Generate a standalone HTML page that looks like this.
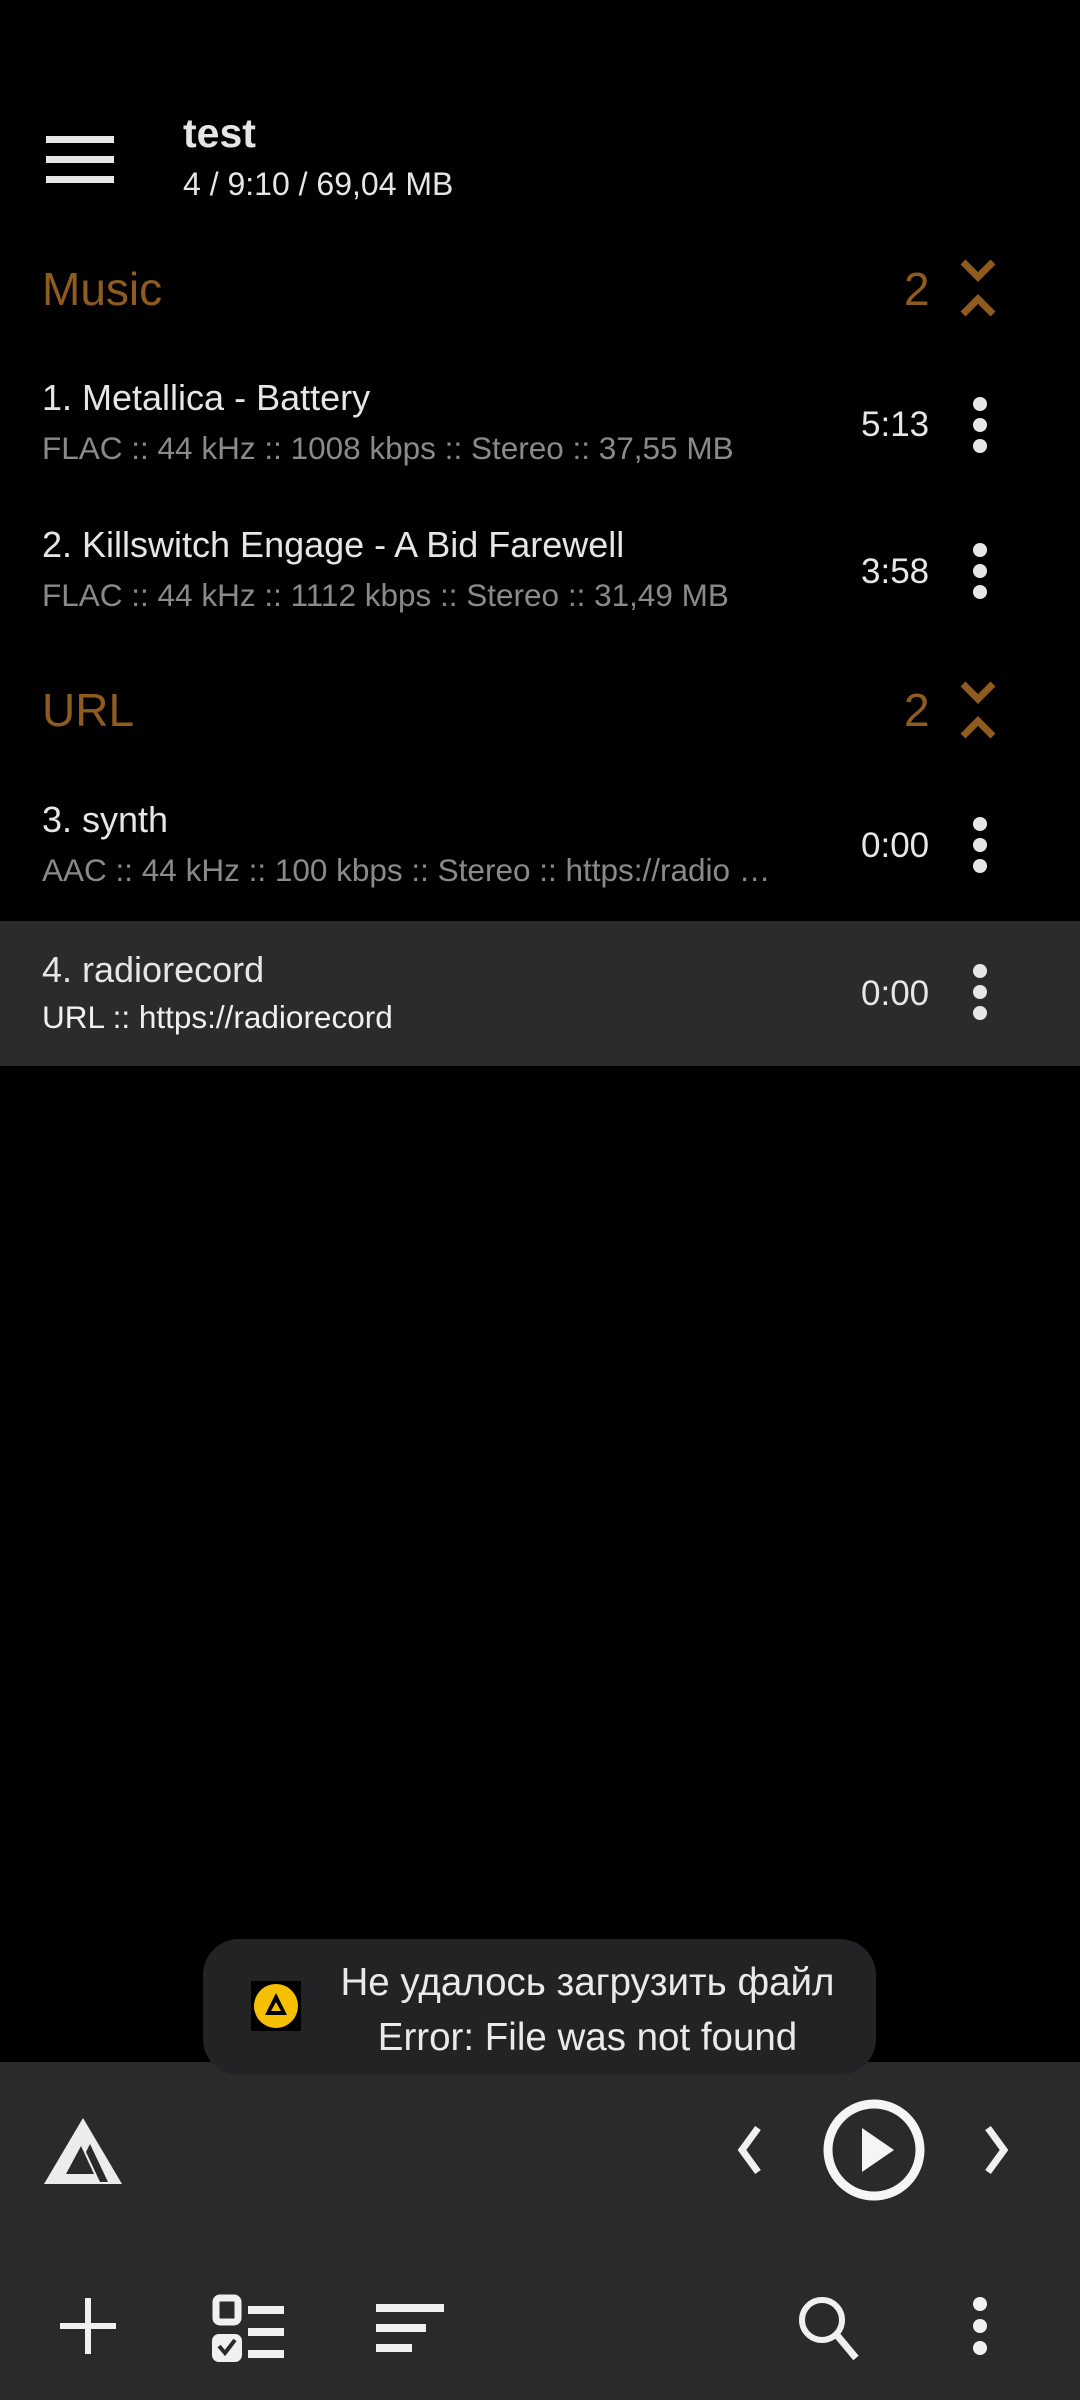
<!DOCTYPE html>
<html><head><meta charset="utf-8"><style>
html,body{margin:0;padding:0;background:#000;width:1080px;height:2400px;overflow:hidden;font-family:"Liberation Sans","Noto Sans CJK SC",sans-serif;}
.abs{position:absolute;white-space:nowrap;}
.t{color:#e6e6e6;font-size:36px;}
.s{color:#8a8a8a;font-size:31.5px;}
.tm{color:#e6e6e6;font-size:35px;}
.h{color:#8f5b1e;font-size:46px;}
</style></head><body>
<svg class="abs" style="left:46px;top:136px" width="68" height="48"><rect x="0" y="0" width="68" height="7" fill="#e6e6e6"/><rect x="0" y="20" width="68" height="7" fill="#e6e6e6"/><rect x="0" y="40" width="68" height="7" fill="#e6e6e6"/></svg>
<div class="abs" style="left:183px;top:110px;color:#e6e6e6;font-size:41px;font-weight:bold">test</div>
<div class="abs" style="left:183px;top:166px;color:#e6e6e6;font-size:32px">4 / 9:10 / 69,04 MB</div>

<div class="abs h" style="left:42px;top:262px">Music</div>
<div class="abs h" style="left:904px;top:262px">2</div>
<svg class="abs" style="left:958px;top:258px" width="40" height="60"><path d="M5 4 L20 19 L35 4" stroke="#8f5b1e" stroke-width="7" fill="none"/><path d="M5 56 L20 41 L35 56" stroke="#8f5b1e" stroke-width="7" fill="none"/></svg>

<div class="abs t" style="left:42px;top:377px">1. Metallica - Battery</div>
<div class="abs s" style="left:42px;top:430px">FLAC :: 44 kHz :: 1008 kbps :: Stereo :: 37,55 MB</div>
<div class="abs tm" style="left:861px;top:405px">5:13</div>
<svg class="abs" style="left:970px;top:396px" width="20" height="60"><circle cx="10" cy="8" r="7" fill="#e6e6e6"/><circle cx="10" cy="29" r="7" fill="#e6e6e6"/><circle cx="10" cy="50" r="7" fill="#e6e6e6"/></svg>

<div class="abs t" style="left:42px;top:524px">2. Killswitch Engage - A Bid Farewell</div>
<div class="abs s" style="left:42px;top:577px">FLAC :: 44 kHz :: 1112 kbps :: Stereo :: 31,49 MB</div>
<div class="abs tm" style="left:861px;top:552px">3:58</div>
<svg class="abs" style="left:970px;top:542px" width="20" height="60"><circle cx="10" cy="8" r="7" fill="#e6e6e6"/><circle cx="10" cy="29" r="7" fill="#e6e6e6"/><circle cx="10" cy="50" r="7" fill="#e6e6e6"/></svg>

<div class="abs h" style="left:42px;top:683px">URL</div>
<div class="abs h" style="left:904px;top:683px">2</div>
<svg class="abs" style="left:958px;top:680px" width="40" height="60"><path d="M5 4 L20 19 L35 4" stroke="#8f5b1e" stroke-width="7" fill="none"/><path d="M5 56 L20 41 L35 56" stroke="#8f5b1e" stroke-width="7" fill="none"/></svg>

<div class="abs t" style="left:42px;top:799px">3. synth</div>
<div class="abs s" style="left:42px;top:852px">AAC :: 44 kHz :: 100 kbps :: Stereo :: https://radio …</div>
<div class="abs tm" style="left:861px;top:826px">0:00</div>
<svg class="abs" style="left:970px;top:816px" width="20" height="60"><circle cx="10" cy="8" r="7" fill="#e6e6e6"/><circle cx="10" cy="29" r="7" fill="#e6e6e6"/><circle cx="10" cy="50" r="7" fill="#e6e6e6"/></svg>

<div class="abs" style="left:0;top:921px;width:1080px;height:145px;background:#2b2b2b"></div>
<div class="abs t" style="left:42px;top:949px">4. radiorecord</div>
<div class="abs" style="left:42px;top:999px;color:#f0f0f0;font-size:31.5px">URL :: https://radiorecord</div>
<div class="abs tm" style="left:861px;top:974px">0:00</div>
<svg class="abs" style="left:970px;top:963px" width="20" height="60"><circle cx="10" cy="8" r="7" fill="#e6e6e6"/><circle cx="10" cy="29" r="7" fill="#e6e6e6"/><circle cx="10" cy="50" r="7" fill="#e6e6e6"/></svg>

<div class="abs" style="left:0;top:2062px;width:1080px;height:338px;background:#2a2a2a"></div>

<div class="abs" style="left:203px;top:1939px;width:673px;height:136px;border-radius:36px;background:#232325"></div>
<svg class="abs" style="left:251px;top:1981px" width="50" height="50"><rect width="50" height="50" fill="#000"/><circle cx="25" cy="25" r="22" fill="#f5c000"/><path d="M25 12 L36 34 L14 34 Z M25 21 L20 30 L30 30 Z" fill="#000" fill-rule="evenodd"/></svg>
<div class="abs" style="left:310px;top:1955px;width:555px;text-align:center;color:#eaeaea;font-size:38.5px;line-height:55px">Не удалось загрузить файл<br>Error: File was not found</div>

<svg class="abs" style="left:44px;top:2118px" width="82" height="68"><path d="M39 0 L78 66 L0 66 Z" fill="#ececec"/><path d="M37 28 L22 56 L50 56 Z" fill="#2a2a2a"/><path d="M46 26 L64 64 L56 64 L42 34 Z" fill="#2a2a2a"/></svg>

<svg class="abs" style="left:734px;top:2124px" width="30" height="52"><path d="M24 4 L8 26 L24 48" stroke="#f0f0f0" stroke-width="7" fill="none"/></svg>
<svg class="abs" style="left:822px;top:2098px" width="104" height="104"><circle cx="52" cy="52" r="46" stroke="#f5f5f5" stroke-width="9" fill="none"/><path d="M40 30 L72 52 L40 74 Z" fill="#f5f5f5"/></svg>
<svg class="abs" style="left:982px;top:2124px" width="30" height="52"><path d="M6 4 L22 26 L6 48" stroke="#f0f0f0" stroke-width="7" fill="none"/></svg>

<svg class="abs" style="left:60px;top:2298px" width="56" height="56"><rect x="25" y="0" width="6" height="56" fill="#f0f0f0"/><rect x="0" y="25" width="56" height="6" fill="#f0f0f0"/></svg>
<svg class="abs" style="left:212px;top:2294px" width="74" height="68"><rect x="4" y="4" width="22" height="24" rx="4" stroke="#f0f0f0" stroke-width="7" fill="none"/><rect x="0" y="40" width="30" height="28" rx="7" fill="#f0f0f0"/><path d="M7 52 L13 59 L23 46" stroke="#2a2a2a" stroke-width="4" fill="none"/><rect x="36" y="12" width="36" height="8" fill="#f0f0f0"/><rect x="36" y="34" width="36" height="8" fill="#f0f0f0"/><rect x="36" y="56" width="36" height="8" fill="#f0f0f0"/></svg>
<svg class="abs" style="left:376px;top:2304px" width="70" height="48"><rect x="0" y="0" width="68" height="8" fill="#f0f0f0"/><rect x="0" y="20" width="50" height="8" fill="#f0f0f0"/><rect x="0" y="40" width="36" height="8" fill="#f0f0f0"/></svg>
<svg class="abs" style="left:796px;top:2294px" width="66" height="66"><circle cx="26" cy="26" r="20" stroke="#f0f0f0" stroke-width="6" fill="none"/><path d="M40 40 L60 64" stroke="#f0f0f0" stroke-width="7"/></svg>
<svg class="abs" style="left:970px;top:2296px" width="20" height="60"><circle cx="10" cy="8" r="7" fill="#f0f0f0"/><circle cx="10" cy="30" r="7" fill="#f0f0f0"/><circle cx="10" cy="52" r="7" fill="#f0f0f0"/></svg>
</body></html>
